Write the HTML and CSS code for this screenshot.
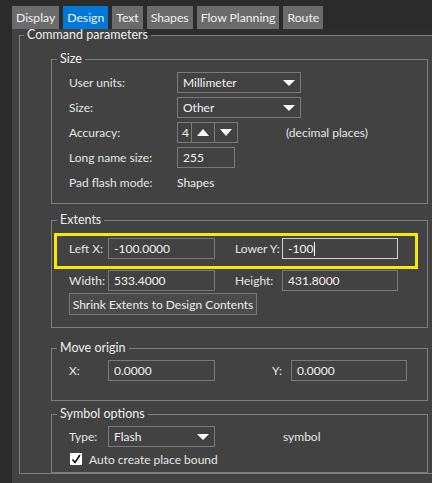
FILE: index.html
```html
<!DOCTYPE html>
<html lang="en">
<head>
    <meta charset="UTF-8">
    <title>Design options</title>
    <link rel="stylesheet" href="styles.css">
</head>
<body>
    <!-- tab strip -->
    <div class="tabs">
        <span class="tab">Display</span>
        <span class="tab active">Design</span>
        <span class="tab">Text</span>
        <span class="tab">Shapes</span>
        <span class="tab">Flow Planning</span>
        <span class="tab">Route</span>
    </div>

    <div class="pane">
        <fieldset class="group command">
            <legend>Command parameters</legend>

            <!-- Size -->
            <fieldset class="group size">
                <legend>Size</legend>
                <div class="size-grid">
                    <span class="lbl">User units:</span>
                    <div class="select wide">Millimeter</div>

                    <span class="lbl">Size:</span>
                    <div class="select wide">Other</div>

                    <span class="lbl">Accuracy:</span>
                    <div class="row">
                        <div class="spinner">
                            <span class="spin-val">4</span>
                            <span class="spin-btn"><i class="tri up"></i></span>
                            <span class="spin-btn"><i class="tri down"></i></span>
                        </div>
                        <span class="note">(decimal places)</span>
                    </div>

                    <span class="lbl">Long name size:</span>
                    <div class="input short">255</div>

                    <span class="lbl">Pad flash mode:</span>
                    <span class="value">Shapes</span>
                </div>
            </fieldset>

            <!-- Extents -->
            <fieldset class="group extents">
                <legend>Extents</legend>
                <div class="highlight">
                    <span class="lbl lbl-x">Left X:</span>
                    <div class="input mid">-100.0000</div>
                    <span class="lbl lbl-y">Lower Y:</span>
                    <div class="input long focus">-100<span class="caret"></span></div>
                </div>
                <div class="row pair">
                    <span class="lbl lbl-x">Width:</span>
                    <div class="input mid">533.4000</div>
                    <span class="lbl lbl-y">Height:</span>
                    <div class="input long">431.8000</div>
                </div>
                <button class="btn shrink">Shrink Extents to Design Contents</button>
            </fieldset>

            <!-- Move origin -->
            <fieldset class="group origin">
                <legend>Move origin</legend>
                <div class="row pair">
                    <span class="lbl lbl-x">X:</span>
                    <div class="input mid">0.0000</div>
                    <span class="lbl lbl-yr">Y:</span>
                    <div class="input long">0.0000</div>
                </div>
            </fieldset>

            <!-- Symbol options -->
            <fieldset class="group symbol">
                <legend>Symbol options</legend>
                <div class="row pair">
                    <span class="lbl lbl-x">Type:</span>
                    <div class="select mid">Flash</div>
                    <span class="note sym">symbol</span>
                </div>
                <label class="check-row">
                    <span class="checkbox">
                        <svg width="12" height="12" viewBox="0 0 12 12"><polyline points="2.5,6.5 5,9.5 10,2" fill="none" stroke="#000" stroke-width="1.4"/></svg>
                    </span>
                    Auto create place bound
                </label>
            </fieldset>
        </fieldset>
    </div>
</body>
</html>
```

FILE: styles.css
```css
/* base */
body {
    margin: 0;
    width: 432px;
    height: 483px;
    overflow: hidden;
    background: #2b2b2b;
    color: #e6e6e6;
    font-family: 'Lato', 'Noto Sans', sans-serif;
    font-size: 12px;
    white-space: nowrap;
}

/* tabs */
.tabs {
    display: flex;
    gap: 4px;
    padding: 6px 0 0 12px;
    height: 23px;
}
.tab {
    display: flex;
    align-items: center;
    padding: 0 4px;
    background: #6b6b6b;
    color: #f2f2f2;
    font-size: 12.2px;
}
.tab.active {
    background: #0078d7;
}

/* strip right of the first legend stays dark above the group line */
.pane {
    margin-left: 12px;
    height: 454px;
    background: linear-gradient(#2d2d2d, #2d2d2d) no-repeat 133px 0 / 100% 6px, #424242;
}

/* group boxes (legend sits after the padding, so pull it back) */
.group {
    margin: 0;
    padding: 0;
    border: 1px solid #7e7e7e;
    min-width: 0;
}
.group > legend {
    margin-left: -12px;
    padding: 0 3px;
    line-height: 12px;
    color: #f0f0f0;
    font-size: 12.5px;
}
.command {
    margin-left: 7px;
    width: 425px;
    padding: 12px 15px 0 31px;
    box-sizing: border-box;
}
.command > legend {
    margin-left: -27px;
}

.size {
    padding: 7px 0 10px 17px;
}
.size-grid {
    display: grid;
    grid-template-columns: 108px 1fr;
    grid-auto-rows: 21px;
    row-gap: 4px;
    align-items: center;
}

.extents {
    margin-top: 10px;
    padding: 7px 0 12px 2px;
}
.extents > legend {
    margin-left: 3px;
}
.origin {
    margin-top: 14px;
    padding: 6px 0 19px 17px;
}
.symbol {
    margin-top: 7px;
    padding: 6px 0 7px 17px;
}

/* rows */
.row {
    display: flex;
    align-items: center;
}
.pair {
    height: 21px;
}
.extents .pair {
    margin: 1px 0 0 15px;
}
.lbl-x {
    width: 39px;
}
.lbl-y {
    width: 47px;
    margin-left: 20px;
}
.lbl-yr {
    width: 58px;
    margin-left: 9px;
    padding-right: 9px;
    text-align: right;
}

.highlight {
    display: flex;
    align-items: flex-start;
    width: 364px;
    height: 36px;
    box-sizing: border-box;
    border: 3px solid #f6ea00;
    padding: 2px 0 0 12px;
}
.highlight .lbl {
    line-height: 21px;
}

/* controls */
.input,
.select {
    height: 21px;
    box-sizing: border-box;
    border: 1px solid #7a7a7a;
    padding: 0 5px;
    line-height: 19px;
    color: #f4f4f4;
    display: flex;
    align-items: center;
}
.input.focus {
    border-color: #d2d2d2;
}
.caret {
    width: 1px;
    height: 14px;
    background: #ffffff;
    margin-left: 1px;
}
.wide { width: 124px; }
.short { width: 58px; }
.mid { width: 107px; }
.long { width: 116px; }

.select {
    position: relative;
}
.select::after {
    content: '';
    position: absolute;
    right: 5px;
    top: 7px;
    border-left: 6px solid transparent;
    border-right: 6px solid transparent;
    border-top: 6px solid #ffffff;
}

.spinner {
    display: flex;
    height: 21px;
    box-sizing: border-box;
    border: 1px solid #7a7a7a;
}
.spin-val {
    width: 13px;
    padding-left: 4px;
    box-sizing: border-box;
    line-height: 19px;
    color: #f4f4f4;
}
.spin-btn {
    width: 22px;
    border-left: 1px solid #7a7a7a;
    display: flex;
    align-items: center;
    justify-content: center;
}
.tri {
    width: 0;
    height: 0;
    border-left: 6px solid transparent;
    border-right: 6px solid transparent;
}
.tri.up { border-bottom: 7px solid #ffffff; }
.tri.down { border-top: 7px solid #ffffff; }

.note {
    margin-left: 48px;
}
.note.sym {
    margin-left: 68px;
}
.value {
    color: #eeeeee;
}

.btn {
    display: block;
    margin: 2px 0 0 15px;
    width: 188px;
    height: 22px;
    padding: 0;
    background: #4a4a4a;
    border: 1px solid #777777;
    color: #eeeeee;
    font: inherit;
}

.check-row {
    display: flex;
    align-items: center;
    gap: 7px;
    margin: 6px 0 0 1px;
    height: 12px;
}
.checkbox {
    width: 12px;
    height: 12px;
    background: #ffffff;
    display: flex;
}
```
